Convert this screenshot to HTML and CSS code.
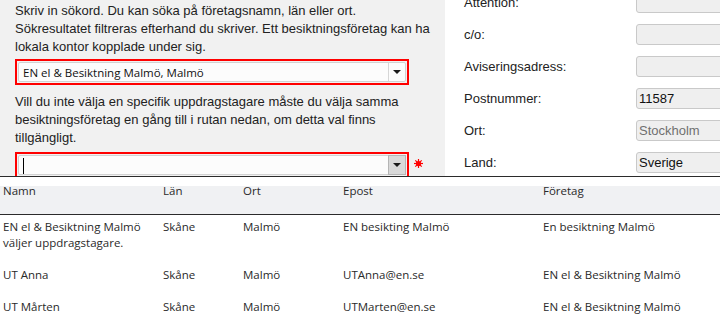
FILE: index.html
```html
<!DOCTYPE html>
<html lang="sv">
<head>
<meta charset="utf-8">
<title>Uppdragstagare</title>
<link rel="stylesheet" href="styles.css">
</head>
<body>
<div class="page">
  <div class="left">
    <p class="intro">Skriv in sökord. Du kan söka på företagsnamn, län eller ort.<br>Sökresultatet filtreras efterhand du skriver. Ett besiktningsföretag kan ha lokala kontor kopplade under sig.</p>
    <div class="combo">
      <div class="field">
        <span class="value">EN el &amp; Besiktning Malmö, Malmö</span>
        <span class="btn"><span class="arrow"></span></span>
      </div>
    </div>
    <p class="note">Vill du inte välja en specifik uppdragstagare måste du välja samma besiktningsföretag en gång till i rutan nedan, om detta val finns tillgängligt.</p>
    <div class="combo-row">
      <div class="combo">
        <div class="field">
          <span class="value"><span class="caret"></span></span>
          <span class="btn pressed"><span class="arrow"></span></span>
        </div>
      </div>
      <svg class="star" width="9" height="9" viewBox="0 0 9 9" aria-hidden="true">
        <g stroke="#ff0000" stroke-width="1.2">
          <line x1="4.5" y1="0" x2="4.5" y2="9"/>
          <line x1="0" y1="4.5" x2="9" y2="4.5"/>
          <line x1="1.3" y1="1.3" x2="7.7" y2="7.7"/>
          <line x1="7.7" y1="1.3" x2="1.3" y2="7.7"/>
        </g>
        <circle cx="4.5" cy="4.5" r="2.6" fill="#ff0000"/>
      </svg>
    </div>
  </div>
  <div class="right">
    <div class="form">
      <div class="row"><span class="label">Attention:</span><span class="input"></span></div>
      <div class="row"><span class="label">c/o:</span><span class="input"></span></div>
      <div class="row"><span class="label">Aviseringsadress:</span><span class="input"></span></div>
      <div class="row"><span class="label">Postnummer:</span><span class="input">11587</span></div>
      <div class="row"><span class="label">Ort:</span><span class="input disabled">Stockholm</span></div>
      <div class="row"><span class="label">Land:</span><span class="input">Sverige</span></div>
    </div>
  </div>

  <div class="dropdown">
    <div class="thead grid">
      <span class="cell">Namn</span>
      <span class="cell">Län</span>
      <span class="cell">Ort</span>
      <span class="cell">Epost</span>
      <span class="cell">Företag</span>
    </div>
    <div class="trow grid">
      <span class="cell">EN el &amp; Besiktning Malmö väljer uppdragstagare.</span>
      <span class="cell">Skåne</span>
      <span class="cell">Malmö</span>
      <span class="cell">EN besikting Malmö</span>
      <span class="cell">En besiktning Malmö</span>
    </div>
    <div class="trow grid">
      <span class="cell">UT Anna</span>
      <span class="cell">Skåne</span>
      <span class="cell">Malmö</span>
      <span class="cell">UTAnna@en.se</span>
      <span class="cell">EN el &amp; Besiktning Malmö</span>
    </div>
    <div class="trow grid">
      <span class="cell">UT Mårten</span>
      <span class="cell">Skåne</span>
      <span class="cell">Malmö</span>
      <span class="cell">UTMarten@en.se</span>
      <span class="cell">EN el &amp; Besiktning Malmö</span>
    </div>
  </div>
</div>
</body>
</html>
```
FILE: styles.css
```css
html, body {
  margin: 0;
  padding: 0;
}

body {
  font-family: "Liberation Sans", Arial, sans-serif;
  font-size: 13px;
  color: #222;
  background: #fff;
}

.page {
  position: relative;
  display: flex;
  width: 720px;
  height: 317px;
  overflow: hidden;
}

/* left panel */
.left {
  flex: none;
  width: 445px;
  box-sizing: border-box;
  background: #f1f1f1;
  padding: 2px 0 0 15px;
}

.intro,
.note {
  width: 425px;
  margin: 0;
  line-height: 18px;
}

.note {
  margin-top: 8px;
}

.combo {
  box-sizing: border-box;
  width: 394px;
  height: 26px;
  margin-top: 3px;
  border: 2px solid #ff0000;
  padding: 1px;
}

.combo-row {
  display: flex;
  align-items: flex-start;
  margin-top: 5px;
}

.combo-row .combo {
  margin-top: 0;
}

.field {
  display: flex;
  height: 100%;
  box-sizing: border-box;
  border: 1px solid #d2d2d2;
  border-radius: 2px;
  background: #fcfcfc;
}

.value {
  flex: 1;
  display: flex;
  align-items: center;
  padding-left: 4px;
  font-family: "Open Sans", "Noto Sans", sans-serif;
  font-size: 11.5px;
  color: #111;
  white-space: nowrap;
  overflow: hidden;
}

.caret {
  display: block;
  width: 1px;
  height: 16px;
  background: #000;
  margin-top: 2px;
}

.btn {
  flex: none;
  width: 16px;
  display: flex;
  align-items: center;
  justify-content: center;
  border-left: 1px solid #d6d6d6;
}

.btn.pressed {
  background: #d9d9d9;
  border: 1px solid #b5b5b5;
  margin: -1px -1px -1px 0;
}

.arrow {
  width: 0;
  height: 0;
  border-left: 4px solid transparent;
  border-right: 4px solid transparent;
  border-top: 4px solid #1a1a1a;
}

.star {
  margin: 7px 0 0 5px;
  flex: none;
}

/* right panel */
.right {
  flex: 1;
  background: #fff;
  padding-left: 19px;
}

.form {
  display: flex;
  flex-direction: column;
  gap: 11px;
  margin-top: -8px;
}

.row {
  display: flex;
  align-items: center;
  height: 21px;
}

.label {
  flex: none;
  width: 172px;
}

.input {
  flex: none;
  box-sizing: border-box;
  width: 120px;
  height: 21px;
  border: 1px solid #c9c9c9;
  border-radius: 3px;
  background: #efefef;
  padding-left: 2px;
  line-height: 19px;
  color: #111;
}

.input.disabled {
  color: #6f6f6f;
}

/* dropdown overlay */
.dropdown {
  position: absolute;
  left: 0;
  top: 176px;
  width: 720px;
  height: 141px;
  background: #fff;
  border-top: 1px solid #2b2b2b;
  font-family: "Open Sans", "Noto Sans", sans-serif;
  font-size: 11.5px;
  color: #2a2a2a;
}

.grid {
  display: grid;
  grid-template-columns: 160px 80px 100px 200px 1fr;
  line-height: 16px;
}

.cell {
  padding-left: 3px;
}

.thead {
  box-sizing: border-box;
  height: 38px;
  padding-top: 6px;
  background: linear-gradient(to bottom, #fff 0, #fff 9px, #f0f1f3 9px);
  border-bottom: 1px solid #2b2b2b;
}

.trow {
  padding: 4px 0 12px;
}
```
